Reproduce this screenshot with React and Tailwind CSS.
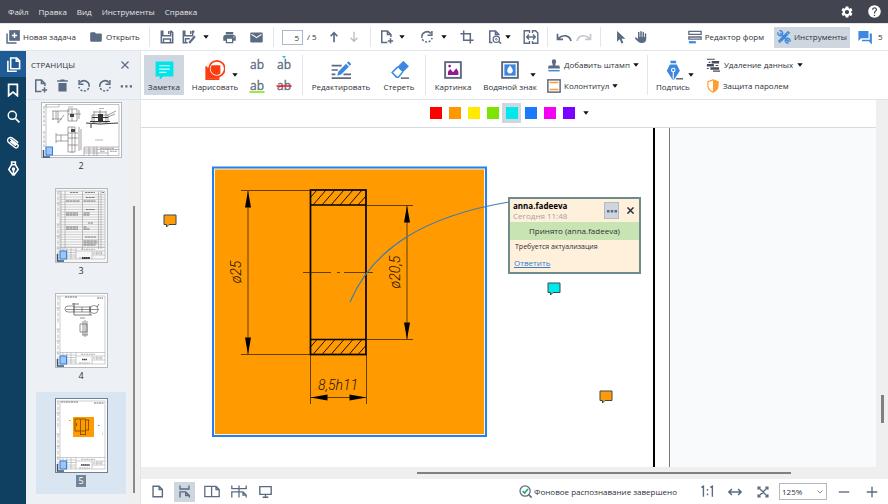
import React from 'react'
import { MdPrint, MdEmail, MdFolder, MdSettings, MdHelp } from 'react-icons/md'
import { FaHand } from 'react-icons/fa6'

function Icon({ size = 14, box = 16, className = 'text-[#5b6b82]', children }) {
  return (
    <svg
      width={size}
      height={size}
      viewBox={`0 0 ${box} ${box}`}
      fill="none"
      stroke="currentColor"
      strokeWidth="1.7"
      className={`shrink-0 ${className}`}
      aria-hidden="true"
    >
      {children}
    </svg>
  )
}

function Caret() {
  return (
    <svg width="6" height="4" viewBox="0 0 6 4" className="shrink-0" aria-hidden="true">
      <path d="M0.3 0.2h5.4L3 3.8z" fill="#111" />
    </svg>
  )
}

function CaretButton({ label, className = '' }) {
  return (
    <button aria-label={label} className={`flex h-5 w-[10px] items-center justify-center ${className}`}>
      <Caret />
    </button>
  )
}

function ToolButton({ label, className = 'w-5', children }) {
  return (
    <button aria-label={label} className={`flex h-5 shrink-0 items-center justify-center text-[#5b6b82] ${className}`}>
      {children}
    </button>
  )
}

function Separator() {
  return <div className="mx-1.5 h-5 w-px shrink-0 bg-[#e1e6ec]" />
}

function PagePlus() {
  return (
    <Icon>
      <path d="M8.5 14.2H2V1.2h6.5l4 4V8M8.5 1.2v4h4M12 9.5v6M9 12.5h6" />
    </Icon>
  )
}

function RotateIcon({ flip }) {
  return (
    <Icon className={flip ? 'text-[#5b6b82] -scale-x-100' : 'text-[#5b6b82]'}>
      <path d="M2.2 9A6 6 0 0 1 12.6 4" />
      <path d="M13.6 1v5h-5" />
      <path d="M2.6 10.5A6 6 0 0 0 13.8 9" strokeDasharray="2.4 1.8" />
    </Icon>
  )
}

function MenuBar() {
  return (
    <header className="flex h-[23px] shrink-0 items-center bg-[#424450] pl-2 pr-1.5 text-[#e4e5e9]">
      <nav className="flex gap-[10px]">
        {['Файл', 'Правка', 'Вид', 'Инструменты', 'Справка'].map((item) => (
          <button key={item}>{item}</button>
        ))}
      </nav>
      <div className="ml-auto flex gap-[13px] text-white">
        <button aria-label="Настройки"><MdSettings size={14} /></button>
        <button aria-label="Помощь"><MdHelp size={15} /></button>
      </div>
    </header>
  )
}

function MainToolbar() {
  return (
    <div className="flex h-7 shrink-0 items-center border-y border-[#e1e6ec] bg-white">
      <button className="flex w-[83px] shrink-0 items-center gap-[3px] pl-1.5">
        <Icon>
          <rect x="4.5" y="1" width="10.5" height="10.5" fill="currentColor" />
          <path d="M1.2 4v10.8H12" />
          <path d="M9.7 3.2v6M6.7 6.2h6" stroke="#fff" />
        </Icon>
        Новая задача
      </button>
      <button className="flex w-[60px] shrink-0 items-center gap-[3px] pl-1.5">
        <MdFolder size={14} className="text-[#5b6b82]" />
        Открыть
      </button>
      <Separator />
      <ToolButton label="Сохранить" className="w-[22px]">
        <Icon>
          <path d="M1.5 1.5h1.7v5h9v-5h.8l1.5 1.5v11.5h-13zM10 1v3.5M4 14.5v-4.2h8v4.2" />
        </Icon>
      </ToolButton>
      <ToolButton label="Сохранить как" className="w-[22px]">
        <Icon>
          <path d="M6.5 14.5h-5v-13h1.7v5h9v-5h.8l1 1.2M10 1v3.5M4 14v-4h5" />
          <path d="M8.2 14.8l6.6-7.6" strokeWidth="2.4" />
        </Icon>
      </ToolButton>
      <CaretButton label="Варианты сохранения" className="ml-px" />
      <ToolButton label="Печать" className="ml-[7px] w-[22px]"><MdPrint size={15} /></ToolButton>
      <ToolButton label="Отправить" className="ml-[5px] w-[22px]"><MdEmail size={15} /></ToolButton>
      <Separator />
      <input
        aria-label="Номер страницы"
        defaultValue="5"
        className="ml-0.5 h-[15px] w-[21px] shrink-0 border border-[#a9b9cb] bg-white pr-[3px] text-right"
      />
      <span className="ml-1 w-[17px] shrink-0">/ 5</span>
      <ToolButton label="Предыдущая страница">
        <Icon size={12}><path d="M8 15V2M3.5 7L8 2.2 12.5 7" strokeWidth="2.2" /></Icon>
      </ToolButton>
      <ToolButton label="Следующая страница">
        <Icon size={12} className="text-[#b5b9bf]"><path d="M8 1v13M3.5 9L8 13.8 12.5 9" strokeWidth="1.7" /></Icon>
      </ToolButton>
      <Separator />
      <ToolButton label="Добавить страницу"><PagePlus /></ToolButton>
      <CaretButton label="Варианты добавления" />
      <ToolButton label="Повернуть" className="ml-2.5 w-5"><RotateIcon /></ToolButton>
      <CaretButton label="Варианты поворота" className="ml-0.5" />
      <ToolButton label="Обрезать" className="ml-2 w-5">
        <Icon><path d="M4.2 0.5v11.3h11.3M0.5 4.2h11.3v11.3" /></Icon>
      </ToolButton>
      <ToolButton label="Распознать" className="ml-2 w-5">
        <Icon>
          <path d="M5 14.2H2V1.2h6.5l4 4V6M8.5 1.2v4h4" />
          <circle cx="9.5" cy="10.5" r="3.6" strokeWidth="1.4" />
          <circle cx="9.5" cy="10.5" r="1" strokeWidth="1" />
          <path d="M12.2 13.2l2.8 2.4" />
        </Icon>
      </ToolButton>
      <CaretButton label="Варианты распознавания" className="-ml-0.5" />
      <ToolButton label="По ширине" className="ml-2 w-5">
        <Icon size={16}>
          <path d="M6.5 4V1.8H1.2v12.4h5.3V12M9.5 4V1.8h3l2.3 2.3v10.1H9.5V12" strokeWidth="1.4" />
          <path d="M4 8h8M6 5.6L3.7 8 6 10.4M10 5.6L12.3 8 10 10.4" strokeWidth="1.4" />
        </Icon>
      </ToolButton>
      <Separator />
      <ToolButton label="Отменить">
        <Icon size={16}><path d="M15 12C13.500 6 7 5 2 9.700M1.500 4.800v5.500H7" /></Icon>
      </ToolButton>
      <ToolButton label="Вернуть">
        <Icon size={16} className="text-[#c6cad0]"><path d="M1 12C2.500 6 9 5 14 9.700M14.500 4.800v5.500H9" /></Icon>
      </ToolButton>
      <Separator />
      <ToolButton label="Выделение" className="ml-1 w-5">
        <Icon size={14}><path d="M3.500 1v12.500l3-2.800 2 4.800 2.200-1-2-4.600h4.300z" fill="currentColor" stroke="none" /></Icon>
      </ToolButton>
      <ToolButton label="Рука"><FaHand size={12} /></ToolButton>
      <div className="ml-auto flex shrink-0 items-center">
        <button className="flex items-center gap-[3px] pr-[10px]">
          <Icon>
            <path d="M1 1.500h14V5H1zM1 8h14v2.500H1z" strokeWidth="1.500" />
            <path d="M1 14h8" stroke="#3d87e0" strokeWidth="2.500" />
          </Icon>
          Редактор форм
        </button>
        <button className="flex h-[21px] w-[76px] items-center gap-[3px] bg-[#ced7e0] pl-[3px]">
          <Icon className="text-[#3d87e0]">
            <path d="M3.500 3.500l10 10" strokeWidth="2" />
            <path d="M1.200 2.500a3 3 0 0 0 4 3.800M2.800 1a3 3 0 0 1 3.500 4M14.800 13.500a3 3 0 0 0-4-3.800M13.200 15a3 3 0 0 1-3.500-4" strokeWidth="1.600" />
            <path d="M2.200 13.800L13.800 2.200" strokeWidth="3.400" />
            <path d="M4 13l1 1M11.500 3.500l1.500 1.500" stroke="#ced7e0" strokeWidth="1" />
          </Icon>
          Инструменты
        </button>
        <button className="flex w-[38px] items-center gap-1.5 pl-2">
          <Icon className="text-[#3d87e0]">
            <path d="M0.500 1H12v8.500H3.500l-3 3z" fill="currentColor" stroke="none" />
            <path d="M14.300 4v8.500M4.500 12H13l2 2.500V4" />
          </Icon>
          5
        </button>
      </div>
    </div>
  )
}

const railButton = 'flex h-[26px] w-full items-center justify-center'

function Rail() {
  return (
    <aside className="w-[26px] shrink-0 bg-[#0f3f61]">
      <button aria-label="Страницы" className={`${railButton} bg-[#1f5b94]`}>
        <Icon size={15} className="text-white">
          <path d="M5 1h6.500l3 3v8.500H5zM11 1v3.500h3.500M2 4v11.200h9.500" />
        </Icon>
      </button>
      <button aria-label="Закладки" className={railButton}>
        <Icon className="text-white"><path d="M3 1.500h10v13L8 10.500l-5 4z" strokeWidth="2" /></Icon>
      </button>
      <button aria-label="Поиск" className={railButton}>
        <Icon size={13} className="text-white">
          <circle cx="6.500" cy="6.500" r="5" strokeWidth="1.800" />
          <path d="M10.300 10.300l5 5" strokeWidth="2.200" />
        </Icon>
      </button>
      <button aria-label="Вложения" className={railButton}>
        <Icon size={13} className="text-white">
          <path d="M4 3.500l8.800 6.800a2.400 2.400 0 0 1-3 3.800L2.200 8.200A3.600 3.600 0 0 1 6.600 2.500l7.200 5.600M11 12L4 6.600M12.200 10.800L5.500 5.500" />
        </Icon>
      </button>
      <button aria-label="Подписи" className={railButton}>
        <Icon size={15} className="text-white">
          <path d="M6 1h4v3l3 5-4.300 6H7.300L3 9l3-5zM5.500 4h5M8 15V9" />
          <circle cx="8" cy="8.500" r="1" />
        </Icon>
      </button>
    </aside>
  )
}

// frame and title block shared by every portrait sheet
function SheetFrame() {
  return (
    <>
      <path d="M5 3h45v68H5zM1.500 3H5M1.500 15H5M1.500 36H5M1.500 48H5M1.500 60H5" stroke="#999" fill="none" strokeWidth="0.500" />
      <path d="M3 3v28M3 36v35" stroke="#aaa" strokeDasharray="4 1.500" strokeWidth="0.800" />
      <path
        d="M5 59.500h45M21 59.500v11.500M21 63h29M37 63v8M42 63v4M46 63v4M37 67h13M8 59.500V71M12 59.500V71M16 59.500V71M5 62h16M5 64.500h16M5 67h16M5 69h16"
        stroke="#999"
        fill="none"
        strokeWidth="0.500"
      />
      <path d="M26 61.300h14M24 70h11M38 65h10" stroke="#999" strokeDasharray="2 0.500" strokeWidth="0.800" />
    </>
  )
}

function PageMark({ y }) {
  return (
    <g>
      <path d={`M2.500 ${y + 3}v7H9`} stroke="#3d4f69" fill="none" strokeWidth="1.500" />
      <rect x="5" y={y} width="6.500" height="8" fill="#9cc6f8" stroke="#2f7fe0" />
    </g>
  )
}

function Thumb2() {
  return (
    <svg width="81" height="56" viewBox="0 0 81 56">
      <rect x="0.500" y="0.500" width="80" height="55" fill="#fff" stroke="#b3b9c0" />
      <path d="M5 2.500h73v51H5zM5 2v3h13V2" stroke="#999" fill="none" strokeWidth="0.600" />
      <path d="M3 4v20M3 29v16" stroke="#aaa" strokeDasharray="3 1.500" />
      <path d="M43 45h35M43 45v9M48 45v9M53 45v9M56 45v9M43 47h13M43 49h13M43 51h13M56 47.500h22M67 47.500v6M56 51h11" stroke="#888" strokeWidth="0.600" />
      <path d="M59 46.300h14M59 49.300h5M69 49.300h7" stroke="#888" strokeDasharray="2 0.400" strokeWidth="0.800" />
      <path d="M11 9h18M11 17h10M15 9v8M17 9v12l6-8M12 9v9M27 7h9v12h-9zM38 8v9M31 7v12M27 12h13" stroke="#666" fill="none" strokeWidth="0.600" />
      <path d="M29 12h4v3h-4zM30 27h4v3h-4z" fill="#444" />
      <path d="M15 33h12M15 39h12M15 31v10M27 25v25h7V25zM27 31h10M27 36h10M27 43h10M40 27v21M38 25v24M31 25v26M20 33v6" stroke="#666" fill="none" strokeWidth="0.600" />
      <path d="M51 13h16v7H51zM53 9v12M65 9v12M59 8v13M53 10h12M67 13l8-4M67 15l7-3" stroke="#555" strokeWidth="0.600" fill="none" />
      <path d="M51 15h16v1H51zM49 19h20v1H49zM57 12h5v8h-5z" fill="#333" />
      <path d="M45 21l14 1 18-1M50 22v4" stroke="#222" strokeWidth="0.900" fill="none" />
      <path d="M27 5h5M58 6.500h5M54 38h8" stroke="#999" strokeWidth="0.700" />
      <PageMark y={45} />
    </svg>
  )
}

function Thumb3() {
  const rows = Array.from({ length: 22 }, (_, i) => 6.5 + i * 2.5)
  return (
    <svg width="53" height="75" viewBox="0 0 53 75">
      <rect x="0.500" y="0.500" width="52" height="74" fill="#f7f7f8" stroke="#b3b9c0" />
      <SheetFrame />
      {rows.map((y) => (
        <path key={y} d={`M6 ${y}h44`} stroke="#bbb" strokeWidth="0.600" />
      ))}
      <path d="M6 3v58M10 3v58M27.500 3v58M43.500 3v58M46 3v58" stroke="#999" strokeWidth="0.600" />
      <path d="M15 4.500h8M30 4.500h10M47 4.500h2M31 9.500h9M31 21.500h9M33 35h5M30 49h11" stroke="#666" strokeDasharray="2.500 0.400" strokeWidth="0.800" />
      <path d="M11 13h14M11 25h12M11 27h12M11 39h12M11 41h12M28.500 13h12M28.500 25h6M28.500 27h6M28.500 39h3M28.500 41h6M28.500 53h14M28.500 55h14M28.500 57h12" stroke="#555" strokeWidth="0.800" strokeDasharray="3 0.400" />
      <path d="M27 70h8" stroke="#333" strokeWidth="1.800" strokeDasharray="1.500 0.300" />
      <PageMark y={63} />
    </svg>
  )
}

function Thumb4() {
  return (
    <svg width="53" height="75" viewBox="0 0 53 75">
      <rect x="0.500" y="0.500" width="52" height="74" fill="#fff" stroke="#b3b9c0" />
      <SheetFrame />
      <path d="M10 4h12M42 5h6" stroke="#777" strokeDasharray="2 0.500" />
      <path d="M19 13v6h-6a3 3 0 0 1 0-6zM19 14h16v5H19M27 14v5M11 16.500h33" stroke="#666" fill="none" strokeWidth="0.700" />
      <circle cx="39" cy="16.500" r="4" stroke="#666" fill="none" strokeWidth="0.700" />
      <path d="M19 10v12M35 13v9M19 22h18M17 11h7M42 14l2-3" stroke="#444" strokeWidth="0.700" fill="none" />
      <path d="M25 25h5M28 28v14M32 28v14M25 31h7v8h-7zM27 42h6M30 27v17" stroke="#666" fill="none" strokeWidth="0.700" />
      <path d="M27 66.500h5" stroke="#444" strokeWidth="1.500" strokeDasharray="1.500 0.300" />
      <PageMark y={63} />
    </svg>
  )
}

function Thumb5() {
  return (
    <svg width="53" height="75" viewBox="0 0 53 75">
      <rect x="0.500" y="0.500" width="52" height="74" fill="#fff" stroke="#6f8094" />
      <SheetFrame />
      <path d="M6 4h17M39 5h10" stroke="#777" strokeDasharray="2 0.500" />
      <rect x="18" y="19" width="21" height="20" fill="#ff9b00" />
      <path d="M25.500 21h5v12h-5zM20 21v12M20 21h5M20 33h5M33.500 22v10M31 22h3M31 32h3M25.500 33v4M30.500 33v4M25.500 36.500h5M21.500 25v3" stroke="#4a2d00" fill="none" strokeWidth="0.600" />
      <path d="M14 22.500h1.500M47 36h1" stroke="#f59300" />
      <path d="M43 27.500h1.500" stroke="#16b5c9" />
      <path d="M26 67h9" stroke="#333" strokeWidth="1.500" strokeDasharray="1.500 0.300" />
      <PageMark y={63} />
    </svg>
  )
}

const pages = [
  { number: 2, Thumb: Thumb2 },
  { number: 3, Thumb: Thumb3 },
  { number: 4, Thumb: Thumb4 },
  { number: 5, Thumb: Thumb5, current: true },
]

function PagesPanel() {
  return (
    <section className="flex w-[115px] shrink-0 flex-col border-r border-[#dfe5ec] bg-[#edf1f5]">
      <div className="h-[49px] shrink-0 border-b border-[#dce3ea] px-2">
        <div className="-ml-[3px] flex h-7 items-center justify-between pr-[3px]">
          <h2>СТРАНИЦЫ</h2>
          <button aria-label="Закрыть панель">
            <Icon size={8}><path d="M1 1l14 14M15 1L1 15" strokeWidth="2.500" /></Icon>
          </button>
        </div>
        <div className="flex h-[13px] items-center justify-between">
          <button aria-label="Добавить страницу"><PagePlus /></button>
          <button aria-label="Удалить">
            <Icon size={13}>
              <path d="M3 5h10v10.500H3zM1.500 1.500h13v2h-13zM5.500 0.500h5v1h-5z" fill="currentColor" stroke="none" />
            </Icon>
          </button>
          <button aria-label="Повернуть влево"><RotateIcon flip /></button>
          <button aria-label="Повернуть вправо"><RotateIcon /></button>
          <button aria-label="Ещё">
            <Icon size={12}>
              <path d="M1 7h3v3H1zM7 7h3v3H7zM13 7h3v3h-3z" fill="currentColor" stroke="none" />
            </Icon>
          </button>
        </div>
      </div>
      <div className="flex min-h-0 flex-1 overflow-hidden">
        <div className="-mt-1 flex flex-1 flex-col gap-[3px] pl-[10px] pr-0.5">
          {pages.map(({ number, Thumb, current }) => (
            <button
              key={number}
              className={`flex flex-col items-center gap-0.5 pb-[7px] pt-1.5 ${current ? 'bg-[#d9e5f1]' : ''}`}
            >
              <Thumb />
              <span className={`h-3 px-0.5 text-[9px] leading-3 ${current ? 'bg-[#748496] text-white' : ''}`}>
                {number}
              </span>
            </button>
          ))}
        </div>
        <div className="flex w-3 justify-center bg-[#efefef] pb-[11px] pt-[106px]">
          <div className="w-0.5 bg-[#8a8a8a]" />
        </div>
      </div>
    </section>
  )
}

function BigTool({ label, className = '', children }) {
  return (
    <button className={`flex h-10 shrink-0 flex-col items-center justify-between pb-[3px] pt-1 ${className}`}>
      <span className="flex h-[22px] items-center">{children}</span>
      <span className="leading-[11px]">{label}</span>
    </button>
  )
}

function RibbonSeparator({ className = '' }) {
  return <div className={`h-10 w-px shrink-0 bg-[#e1e6ec] ${className}`} />
}

const markup = [
  { name: 'Выделить', mark: null },
  { name: 'Вставить текст', mark: <path d="M5 1h4L7 3.500z" fill="#00d5e0" /> },
  { name: 'Подчеркнуть', mark: <path d="M-0.500 16h15" stroke="#7ae300" strokeWidth="1.500" /> },
  { name: 'Зачеркнуть', mark: <path d="M-0.500 10h15" stroke="#ff1010" strokeWidth="1.500" /> },
]

function Ribbon() {
  return (
    <div className="flex h-[49px] shrink-0 items-center border-b border-[#dce3ea] bg-white pl-[3px]">
      <BigTool label="Заметка" className="w-10 bg-[#ced7e0]">
        <Icon size={19}>
          <path d="M0.500 0.500h15v12.500H7L4 15.800V13H0.500z" fill="#00e5ea" stroke="none" />
          <path d="M3.500 4h9M3.500 6.800h9M3.500 9.500h6" stroke="#d9fbfb" strokeWidth="1" />
        </Icon>
      </BigTool>
      <BigTool label="Нарисовать" className="ml-1 w-[54px]">
        <Icon size={20}>
          <path d="M1 5v10.500h10.500" stroke="#fb3d12" strokeWidth="1.400" />
          <path d="M1.500 6h3a6 6 0 0 0 7 7v2h-10z" fill="#fb3d12" stroke="none" />
          <circle cx="9.500" cy="7" r="6.300" fill="#fff" stroke="#fb3d12" strokeWidth="1.300" />
          <path d="M4.500 6.500a5 5 0 0 1 .8-2.300H12.300v6.500A5 5 0 0 1 9.500 12a5 5 0 0 1-5-5z" fill="#fb3d12" stroke="none" />
        </Icon>
      </BigTool>
      <CaretButton label="Фигуры" className="-ml-3" />
      <div className="ml-[10px] grid grid-cols-2 gap-x-3 gap-y-0.5 text-[#5b6b82]">
        {markup.map(({ name, mark }) => (
          <button key={name} aria-label={name}>
            <svg width="15" height="19" viewBox="0 0 15 19" className="overflow-visible">
              <text x="7" y="14" textAnchor="middle" fontSize="12" fill="currentColor" stroke="currentColor" strokeWidth="0.300">ab</text>
              {mark}
            </svg>
          </button>
        ))}
      </div>
      <RibbonSeparator className="ml-[10px]" />
      <BigTool label="Редактировать" className="ml-1.5 w-[64px]">
        <Icon size={20}>
          <path d="M0.500 4.500h8M0.500 8h5M0.500 11.500h3M10 11.500h6M0.500 14.500h15.500" strokeWidth="1.300" />
          <path d="M5 12.500l0.800-3.200L12 3l2.300 2.300-6.200 6.200zM12.700 2.200L14 1l2.300 2.300-1.300 1.200z" fill="#3d87e0" stroke="none" />
        </Icon>
      </BigTool>
      <BigTool label="Стереть" className="ml-1 w-[44px]">
        <Icon size={20}>
          <path d="M7 5.500L11.500 1l4 4-4.500 4.500z" fill="#3d87e0" stroke="#3d87e0" strokeWidth="0.800" />
          <path d="M7 5.500L2.500 10l3.500 3.700h1.500L11 9.500" stroke="#3d87e0" strokeWidth="1.200" />
          <path d="M9.500 14.500H16" strokeWidth="1.200" />
        </Icon>
      </BigTool>
      <RibbonSeparator className="ml-1" />
      <BigTool label="Картинка" className="ml-1.5 w-[42px]">
        <Icon size={18}>
          <rect x="1" y="1" width="14" height="14" />
          <path d="M3.500 12.500V9.500L5.500 7l2.500 3 3-3.500 1.800 3v3z" fill="#94198e" stroke="none" />
          <circle cx="5" cy="4.500" r="1.200" fill="#94198e" stroke="none" />
        </Icon>
      </BigTool>
      <BigTool label="Водяной знак" className="ml-1.5 w-[60px]">
        <Icon size={18}>
          <rect x="1" y="1" width="14" height="14" />
          <rect x="3" y="3" width="10" height="10" fill="#3d87e0" stroke="none" />
          <path d="M8 4c1.500 2 2.500 3 2.500 4.500a2.500 2.500 0 0 1-5 0C5.500 7 6.500 6 8 4z" fill="#fff" stroke="none" />
        </Icon>
      </BigTool>
      <CaretButton label="Варианты водяного знака" className="-ml-3" />
      <div className="ml-[9px] flex shrink-0 flex-col gap-[5px]">
        <button className="flex h-4 items-center gap-[3px]">
          <Icon>
            <path d="M5.500 4a2.500 2.500 0 1 1 5 0c0 1.500-1 2-1 4.500h4.500l1 3.500H1l1-3.500h4.500c0-2.500-1-3-1-4.500z" fill="currentColor" stroke="none" />
            <path d="M1.500 14.500h13" stroke="#3d87e0" />
          </Icon>
          Добавить штамп
          <Caret />
        </button>
        <button className="flex h-4 items-center gap-[3px]">
          <Icon>
            <rect x="1" y="1" width="14" height="14" />
            <path d="M3 4h10M3 12h10" stroke="#ff9c2e" />
          </Icon>
          Колонтитул
          <Caret />
        </button>
      </div>
      <RibbonSeparator className="ml-2" />
      <BigTool label="Подпись" className="ml-1 w-[42px]">
        <Icon size={20}>
          <path d="M6 0.500h4.500v2H6zM5.500 3.500H11l2.500 5L9 15.500H7.500L3 8.500z" fill="#3d87e0" stroke="none" />
          <path d="M8.200 15V8" stroke="#fff" strokeWidth="0.900" />
          <circle cx="8.200" cy="8" r="1.400" fill="#3d87e0" stroke="#fff" strokeWidth="0.900" />
          <path d="M10.500 15H16" strokeWidth="1.200" />
        </Icon>
      </BigTool>
      <CaretButton label="Варианты подписи" className="-ml-2" />
      <div className="ml-2.5 flex shrink-0 flex-col gap-[5px]">
        <button className="flex h-4 items-center gap-1">
          <Icon className="text-[#454b5c]">
            <path d="M1 1.500h9M3 5h2M11 8.500h3M1 12h2M8 15h8" strokeWidth="1.200" />
            <path d="M6.500 4.800H15M1 8.300h8M5 12h10" strokeWidth="2.800" />
          </Icon>
          Удаление данных
          <Caret />
        </button>
        <button className="flex h-4 items-center gap-[3px]">
          <Icon>
            <path d="M8 1l5.800 2v4.500c0 3.500-2.300 6-5.800 7.500-3.500-1.500-5.800-4-5.800-7.500V3z" stroke="#ff9c2e" strokeWidth="1.300" />
            <path d="M8 1l5.800 2v4.500c0 3.500-2.300 6-5.800 7.500z" fill="#ff9c2e" stroke="none" />
          </Icon>
          Защита паролем
        </button>
      </div>
    </div>
  )
}

const colors = [
  { name: 'Красный', bg: 'bg-[#fe0000]' },
  { name: 'Оранжевый', bg: 'bg-[#ff9800]' },
  { name: 'Жёлтый', bg: 'bg-[#ffea00]' },
  { name: 'Зелёный', bg: 'bg-[#7ce400]' },
  { name: 'Голубой', bg: 'bg-[#00e8ea]', selected: true },
  { name: 'Синий', bg: 'bg-[#1c78ff]' },
  { name: 'Розовый', bg: 'bg-[#f500f5]' },
  { name: 'Фиолетовый', bg: 'bg-[#7c00ff]' },
]

function ColorBar() {
  return (
    <div className="flex h-7 shrink-0 items-center justify-center border-b border-[#d3dbe4] bg-white pb-px">
      {colors.map(({ name, bg, selected }) => (
        <button
          key={name}
          aria-label={name}
          className={`flex h-5 w-[19px] items-center justify-center ${selected ? 'bg-[#ced7e0]' : ''}`}
        >
          <span className={`size-3 ${bg}`} />
        </button>
      ))}
      <CaretButton label="Другие цвета" className="ml-[3px]" />
    </div>
  )
}

function Pin({ className, fill }) {
  return (
    <button aria-label="Комментарий" className={`absolute ${className}`}>
      <svg width="14" height="14" viewBox="0 0 14 14">
        <path d="M1 1h12v9.500H6L3.500 13v-2.500H1z" fill={fill} stroke="#3c4a4f" strokeWidth="1" />
      </svg>
    </button>
  )
}

const hatch = 'M98 32l7-8M101 39l13-15M110 39l13-15M119 39l13-15M128 39l13-15M137 39l13-15M146 39l8-9'

// bushing section with its dimension lines
function Drawing() {
  return (
    <svg width="275" height="271" viewBox="0 0 275 271" className="absolute left-[71px] top-[38px]">
      <rect x="1" y="1.500" width="273" height="268.500" fill="#fff3d0" stroke="#2381f5" strokeWidth="2" />
      <rect x="3" y="3.500" width="269" height="264.500" fill="#ff9b00" />
      <g stroke="#000" strokeWidth="0.900">
        <path d={hatch} />
        <path d={hatch} transform="translate(0 149.500)" />
      </g>
      <g stroke="#000" fill="none" strokeWidth="1.700">
        <rect x="98.500" y="24" width="55.500" height="164.500" />
        <path d="M98 39h56M98 173.500h56" />
      </g>
      <g stroke="#3a2600" fill="none" strokeWidth="0.800">
        <path d="M29 24.500h69M29 188.500h69M36 25v163M154 39.500h47M154 173.500h47M195 39v134" />
        <path d="M98.500 189v49M154.500 189v49M99 231.500h55M91 106.500h28M125 106.500h3M132 106.500h29" />
      </g>
      <g fill="#000">
        <path d="M36 24.500l3 17h-6zM36 188.500l3-17h-6zM195 39.500l3 17h-6zM195 173.500l3-17h-6z" />
        <path d="M98.500 231.500l17-3v6zM154.500 231.500l-17-3v6z" />
      </g>
      <g
        fill="#1a1000"
        fontStyle="italic"
        fontWeight="300"
        fontSize="14"
        textAnchor="middle"
        fontFamily="Roboto, sans-serif"
      >
        <text x="126" y="224">8,5h11</text>
        <text transform="translate(29 106) rotate(-90)">ø25</text>
        <text transform="translate(188 106) rotate(-90)">ø20,5</text>
      </g>
    </svg>
  )
}

function Note() {
  return (
    <article className="absolute left-[367px] top-[69px] w-[133px] border-2 border-[#6f8b8b] bg-[#fff0dc]">
      <div className="flex h-[23px] items-center pl-[3px] pr-[5px]">
        <div className="leading-[10px]">
          <div className="font-bold text-black">anna.fadeeva</div>
          <div className="text-[#a5a29e]">Сегодня 11:48</div>
        </div>
        <button aria-label="Действия" className="ml-auto flex h-[17px] w-[15px] items-center justify-center border border-[#b3bac2] bg-[#cfd5dc]">
          <Icon size={10}>
            <path d="M0 6.500h4v4H0zM6 6.500h4v4H6zM12 6.500h4v4h-4z" fill="currentColor" stroke="none" />
          </Icon>
        </button>
        <button aria-label="Закрыть" className="ml-2">
          <Icon size={7} className="text-[#2c333c]"><path d="M1 1l14 14M15 1L1 15" strokeWidth="3.500" /></Icon>
        </button>
      </div>
      <div className="h-[18px] bg-[#c8e4b2] text-center leading-[18px]">Принято (anna.fadeeva)</div>
      <p className="pl-[5px] text-[7px] leading-[14px]">Требуется актуализация</p>
      <a href="#reply" className="block pl-1 leading-[18px] text-[#3080d0] underline">Ответить</a>
    </article>
  )
}

function Canvas() {
  return (
    <div className="relative flex min-h-0 flex-1 overflow-hidden bg-[#f9fafc]">
      <div className="w-[529px] shrink-0 border-r border-[#777] bg-white">
        <div className="h-full w-[514px] border-r-2 border-black" />
      </div>
      <Drawing />
      <svg width="160" height="104" viewBox="0 0 160 104" className="pointer-events-none absolute left-[208px] top-[72px]" fill="none">
        <path d="M1 102C24 48 76 16 160 2" stroke="#3c7cb4" strokeWidth="1.200" />
      </svg>
      <Note />
      <Pin className="left-[22px] top-[86px]" fill="#ff9b0a" />
      <Pin className="left-[406px] top-[154px]" fill="#00e8ea" />
      <Pin className="left-[458px] top-[262px]" fill="#ff9b0a" />
    </div>
  )
}

function StatusBar() {
  return (
    <footer className="flex h-[25px] shrink-0 items-center bg-white pl-1.5">
      <div className="flex gap-1.5">
        <ToolButton label="Одна страница" className="w-[21px]">
          <Icon size={13}><path d="M2.500 1.500H10l4 4v9H2.500zM10 1.500v4h4" /></Icon>
        </ToolButton>
        <ToolButton label="Непрерывно" className="w-[21px] bg-[#ced7e0]">
          <Icon size={13}><path d="M2.500 0.500V5h11V0.500M2.500 15.500v-7h7l4.500 4.500v2.500M9.500 8.500V13H14" /></Icon>
        </ToolButton>
        <ToolButton label="Разворот" className="w-[21px]">
          <svg width="16" height="13" viewBox="0 0 20 16" fill="none" stroke="currentColor" strokeWidth="1.600">
            <path d="M1 1.500h14l4 4v9H1zM9.500 1.500v13M15 1.500v4h4" />
          </svg>
        </ToolButton>
        <ToolButton label="Развороты непрерывно" className="w-[21px]">
          <svg width="16" height="13" viewBox="0 0 20 16" fill="none" stroke="currentColor" strokeWidth="1.600">
            <path d="M1 0.500v4h18v-4M10 0.500v15M1 15.500v-7h14l4 4v3M15 8.500v4h4" />
          </svg>
        </ToolButton>
        <ToolButton label="Во весь экран" className="w-[21px]">
          <Icon size={13}><path d="M1 2h14v9.500H1zM8 11.500V15M4.500 15h7" /></Icon>
        </ToolButton>
      </div>
      <div className="ml-auto flex items-center gap-0.5">
        <Icon size={13}>
          <circle cx="7.500" cy="7.500" r="6.300" strokeWidth="1.500" />
          <path d="M12 12l3.500 3.500" strokeWidth="2" />
          <path d="M4.500 7.500L7 10l4-5" stroke="#2aa86a" strokeWidth="2" />
        </Icon>
        Фоновое распознавание завершено
      </div>
      <div className="ml-5 flex items-center">
        <ToolButton label="Масштаб 1 к 1">
          <Icon size={13}><path d="M0.500 3L3 1.500v13M11.500 3L14 1.500v13M8 5v2M8 10.500v2" /></Icon>
        </ToolButton>
        <ToolButton label="По ширине" className="ml-2 w-5">
          <Icon size={14}><path d="M1 8h14M4.500 4.500L1 8l3.500 3.500M11.500 4.500L15 8l-3.500 3.500" strokeWidth="1.800" /></Icon>
        </ToolButton>
        <ToolButton label="По размеру" className="ml-2 w-5">
          <Icon size={12}><path d="M2 2l12 12M14 2L2 14M1.500 5V1.500H5M11 1.500h3.500V5M1.500 11v3.500H5M11 14.500h3.500V11" strokeWidth="1.800" /></Icon>
        </ToolButton>
        <div className="relative ml-1.5 flex items-center">
          <select aria-label="Масштаб" className="h-[17px] w-[48px] appearance-none border border-[#b5b8bc] bg-white pl-0.5">
            <option>125%</option>
          </select>
          <svg width="6" height="4" viewBox="0 0 6 4" fill="none" stroke="#8a8f96" className="pointer-events-none absolute right-1">
            <path d="M0.500 0.500L3 3l2.500-2.500" />
          </svg>
        </div>
        <ToolButton label="Уменьшить" className="ml-[7px] w-5">
          <Icon size={12}><path d="M1 8h14" strokeWidth="1.800" /></Icon>
        </ToolButton>
        <ToolButton label="Увеличить" className="ml-2 mr-1.5 w-5">
          <Icon size={12}><path d="M1 8h14M8 1v14" strokeWidth="1.800" /></Icon>
        </ToolButton>
      </div>
    </footer>
  )
}

export default function App() {
  return (
    <div className="flex h-screen flex-col overflow-hidden whitespace-nowrap bg-white font-['Open_Sans',sans-serif] text-[8px] leading-3 text-[#2d3138]">
      <MenuBar />
      <MainToolbar />
      <div className="flex min-h-0 flex-1">
        <Rail />
        <PagesPanel />
        <main className="flex min-w-0 flex-1 flex-col">
          <Ribbon />
          <div className="flex min-h-0 flex-1">
            <div className="flex min-w-0 flex-1 flex-col">
              <ColorBar />
              <Canvas />
            </div>
            <div className="flex w-3 flex-col items-center justify-end bg-[#efefef] pb-11">
              <div className="h-7 w-[3px] bg-[#808080]" />
            </div>
          </div>
          <div className="flex h-3 shrink-0 items-center bg-[#efefef]">
            <div className="ml-[37%] h-0.5 w-1/2 bg-[#808080]" />
          </div>
          <StatusBar />
        </main>
      </div>
    </div>
  )
}
